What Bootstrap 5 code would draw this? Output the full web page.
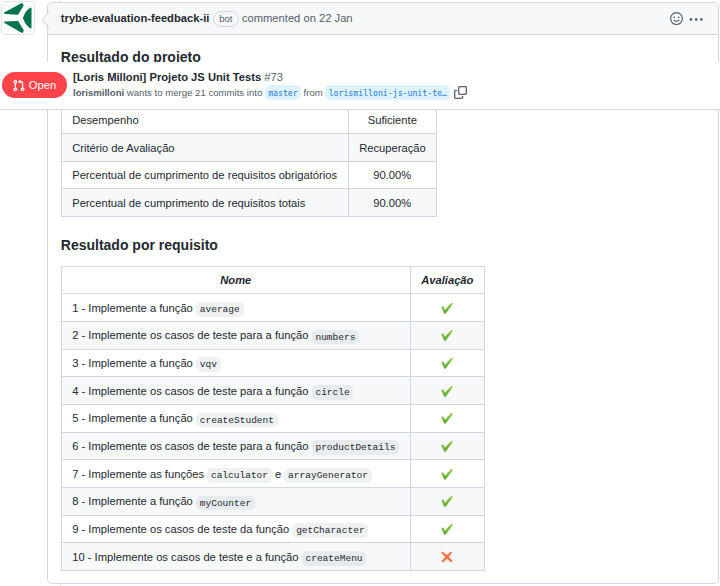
<!DOCTYPE html>
<html lang="pt-BR">
<head>
<meta charset="utf-8">
<title>[Loris Milloni] Projeto JS Unit Tests #73</title>
<link rel="stylesheet" href="https://cdn.jsdelivr.net/npm/bootstrap@5.3.0/dist/css/bootstrap.min.css">
<style>
body{font-family:"Liberation Sans",Arial,sans-serif;font-size:11.2px;line-height:16.8px;color:#24292f;background:#fff;height:586px;overflow:hidden}
.timeline{height:586px;padding:2px 1px 0 0}
.timeline::before{content:"";position:absolute;left:60px;top:0;bottom:0;width:1px;background:#e3e7eb}
.avatar-col{width:47px;padding-left:1px}
.avatar-box{width:34px;height:34px;border:1px solid #dfe2e6;border-radius:5px;background:#fff;margin-top:-1px}
.comment{height:582px;border:1px solid #d0d7de;border-radius:5px;min-width:0}
.comment-head{height:32px;background:#f6f8fa;border-bottom:1px solid #d0d7de;border-radius:4px 4px 0 0;padding:0 12px 0 12.8px;color:#57606a}
.comment-head strong{color:#24292f}
.caret{position:absolute;left:-7px;top:9px}
.bot-tag{border:1px solid #d0d7de;border-radius:10px;font-size:9.6px;line-height:14px;padding:0 5.2px;margin:1px 3.2px 0 3.6px}
.comment-body{padding:13px 12.8px 0}
.section-title{font-size:14px;font-weight:700;line-height:18px;margin:0}
.result-table{border-collapse:collapse;table-layout:fixed;color:#24292f}
.result-table td,.result-table th{border:1px solid #d0d7de;padding:.8px 10.4px 0;height:27.64px;vertical-align:middle;white-space:nowrap}
.result-table .alt{background:#f6f8fa}
.result-table th{font-style:italic;text-align:center;height:27.3px;padding-top:0}
.result-table code{font:9.52px/14px "Liberation Mono",monospace;color:#24292f;background:#eff1f3;border-radius:5px;padding:1.8px 3.8px 2px}
.result-table .alt code{background:#e7ebee}
.result-table svg{display:block;margin:-1px auto 0}
.summary{width:376px;margin-top:39.6px}
.requirements{width:424px;margin-top:12px}
.requirements td{height:27.68px}
.second{margin-top:19px}
.pr-bar{top:62px;height:48px;background:#fff;border-bottom:1px solid #d0d7de;padding:0 2px 2px 2px}
.state{width:65px;height:26px;border-radius:13px;background:#fd444a;color:#fff;font-size:11.2px;gap:4px;padding-top:1px}
.pr-info{margin-left:6px;padding-top:1px}
.pr-title{line-height:15px}
.pr-title span,.pr-meta{color:#57606a}
.pr-meta{font-size:9.6px;line-height:16px}
.branch{font:8.2px/16px "DejaVu Sans Mono","Liberation Mono",monospace;color:#2378d6;background:#ddf4ff;border-radius:5px;padding:0 3.2px;height:15px}
.copy-icon{margin-left:4px}
</style>
<script src="https://cdn.jsdelivr.net/npm/bootstrap@5.3.0/dist/js/bootstrap.bundle.min.js"></script>
</head>
<body>
<svg width="0" height="0" class="position-absolute" aria-hidden="true">
<defs>
<linearGradient id="green" x1="0" y1="0" x2="0" y2="1"><stop offset="0" stop-color="#92cc48"/><stop offset="1" stop-color="#62a834"/></linearGradient>
<symbol id="check" viewBox="0 0 12 12"><path fill="url(#green)" d="M.3 5.2Q1.2 4.3 2.5 4.7L4.1 7.8Q6.9 3.8 10.8.8L11.8 1.3Q11.3 3 9.5 5.2Q6.9 8.2 5.1 11.3Q4.1 12 3.1 11.6Q1.8 8.3 .3 5.2Z"/></symbol>
<symbol id="cross" viewBox="0 0 12 12"><path fill="#f8734a" d="M.4 1.7 1.8.5 6 4.1 10 .4 11.4 1.6 7.8 5.8 11.7 9.9 10.2 11.5 6 7.8 2 11.6.4 10.2 4.2 6Z"/></symbol>
</defs>
</svg>
<main class="timeline d-flex position-relative">
<div class="avatar-col flex-shrink-0">
<div class="avatar-box"><svg width="32" height="32" viewBox="0 0 32 32" fill="#04734f" stroke="#04734f" stroke-linejoin="round" stroke-width="1.8"><path d="M3 11 19.8 2 20.8 3.4 15.6 11.8Z"/><path d="M28.6 6.4V25.6Q24 22.5 21.9 16Q24 9.2 28.6 6.4Z"/><path d="M3 20.3 15.6 19.8 20.9 28.6 20 30Z"/></svg></div>
</div>
<article class="comment flex-grow-1 position-relative bg-white">
<svg class="caret" width="8" height="16" viewBox="0 0 8 16"><path d="M8 0 1 7.5 8 15" fill="#f6f8fa" stroke="#c4cdd6"/></svg>
<header class="comment-head d-flex align-items-center">
<strong>trybe-evaluation-feedback-ii</strong><span class="bot-tag">bot</span><span>commented on 22 Jan</span>
<svg class="ms-auto" width="14" height="14" viewBox="0 0 14 14" fill="none" stroke="#57606a" stroke-width="1.2"><circle cx="6.5" cy="6.6" r="5.9"/><path d="M4 8.2Q6.5 10.7 9 8.2" stroke-linecap="round"/><circle cx="4.3" cy="5.4" r=".8" fill="#57606a" stroke="none"/><circle cx="8.7" cy="5.4" r=".8" fill="#57606a" stroke="none"/></svg>
<svg class="ms-1" width="18" height="14" viewBox="0 0 18 14" fill="#57606a"><circle cx="3" cy="7.4" r="1.3"/><circle cx="8.2" cy="7.4" r="1.3"/><circle cx="13.4" cy="7.4" r="1.3"/></svg>
</header>
<div class="comment-body">
<h3 class="section-title">Resultado do projeto</h3>
<table class="result-table summary">
<colgroup><col style="width:287px"><col style="width:88px"></colgroup>
<tbody>
<tr><td>Desempenho</td><td class="text-center">Suficiente</td></tr>
<tr class="alt"><td>Critério de Avaliação</td><td class="text-center">Recuperação</td></tr>
<tr><td>Percentual de cumprimento de requisitos obrigatórios</td><td class="text-center">90.00%</td></tr>
<tr class="alt"><td>Percentual de cumprimento de requisitos totais</td><td class="text-center">90.00%</td></tr>
</tbody>
</table>
<h3 class="section-title second">Resultado por requisito</h3>
<table class="result-table requirements">
<colgroup><col style="width:349px"><col style="width:74px"></colgroup>
<thead><tr><th>Nome</th><th>Avaliação</th></tr></thead>
<tbody>
<tr><td>1 - Implemente a função <code>average</code></td><td><svg width="12" height="12"><use href="#check"/></svg></td></tr>
<tr class="alt"><td>2 - Implemente os casos de teste para a função <code>numbers</code></td><td><svg width="12" height="12"><use href="#check"/></svg></td></tr>
<tr><td>3 - Implemente a função <code>vqv</code></td><td><svg width="12" height="12"><use href="#check"/></svg></td></tr>
<tr class="alt"><td>4 - Implemente os casos de teste para a função <code>circle</code></td><td><svg width="12" height="12"><use href="#check"/></svg></td></tr>
<tr><td>5 - Implemente a função <code>createStudent</code></td><td><svg width="12" height="12"><use href="#check"/></svg></td></tr>
<tr class="alt"><td>6 - Implemente os casos de teste para a função <code>productDetails</code></td><td><svg width="12" height="12"><use href="#check"/></svg></td></tr>
<tr><td>7 - Implemente as funções <code>calculator</code> e <code>arrayGenerator</code></td><td><svg width="12" height="12"><use href="#check"/></svg></td></tr>
<tr class="alt"><td>8 - Implemente a função <code>myCounter</code></td><td><svg width="12" height="12"><use href="#check"/></svg></td></tr>
<tr><td>9 - Implemente os casos de teste da função <code>getCharacter</code></td><td><svg width="12" height="12"><use href="#check"/></svg></td></tr>
<tr class="alt"><td>10 - Implemente os casos de teste e a função <code>createMenu</code></td><td><svg width="12" height="12"><use href="#cross"/></svg></td></tr>
</tbody>
</table>
</div>
</article>
</main>
<div class="pr-bar position-fixed start-0 end-0 d-flex align-items-center">
<span class="state d-flex align-items-center justify-content-center"><svg width="12" height="13" viewBox="0 0 15 16" fill="none" stroke="#fff" stroke-width="1.6"><circle cx="3" cy="3.2" r="1.6"/><circle cx="3" cy="12.8" r="1.6"/><circle cx="12" cy="12.8" r="1.6"/><path d="M3 5v6M12 11V5.5Q12 3.2 9.7 3.2H8"/><path d="M9.4.3V6L6.3 3.2Z" fill="#fff" stroke="none"/></svg>Open</span>
<div class="pr-info">
<div class="pr-title"><strong>[Loris Milloni] Projeto JS Unit Tests</strong> <span>#73</span></div>
<div class="pr-meta d-flex align-items-center"><strong>lorismilloni</strong>&nbsp;wants to merge 21 commits into&nbsp;<span class="branch">master</span><span>&nbsp;from&nbsp;</span><span class="branch">lorismilloni-js-unit-te…</span><svg class="copy-icon" width="13" height="13" viewBox="0 0 13 13" fill="none" stroke="#57606a" stroke-width="1.3"><rect x="4.7" y=".7" width="7.6" height="7.6" rx=".8"/><path d="M3.2 4.4H1.5Q.7 4.4.7 5.2V11.5Q.7 12.3 1.5 12.3H7.8Q8.6 12.3 8.6 11.5V10"/></svg></div>
</div>
</div>
</body>
</html>
